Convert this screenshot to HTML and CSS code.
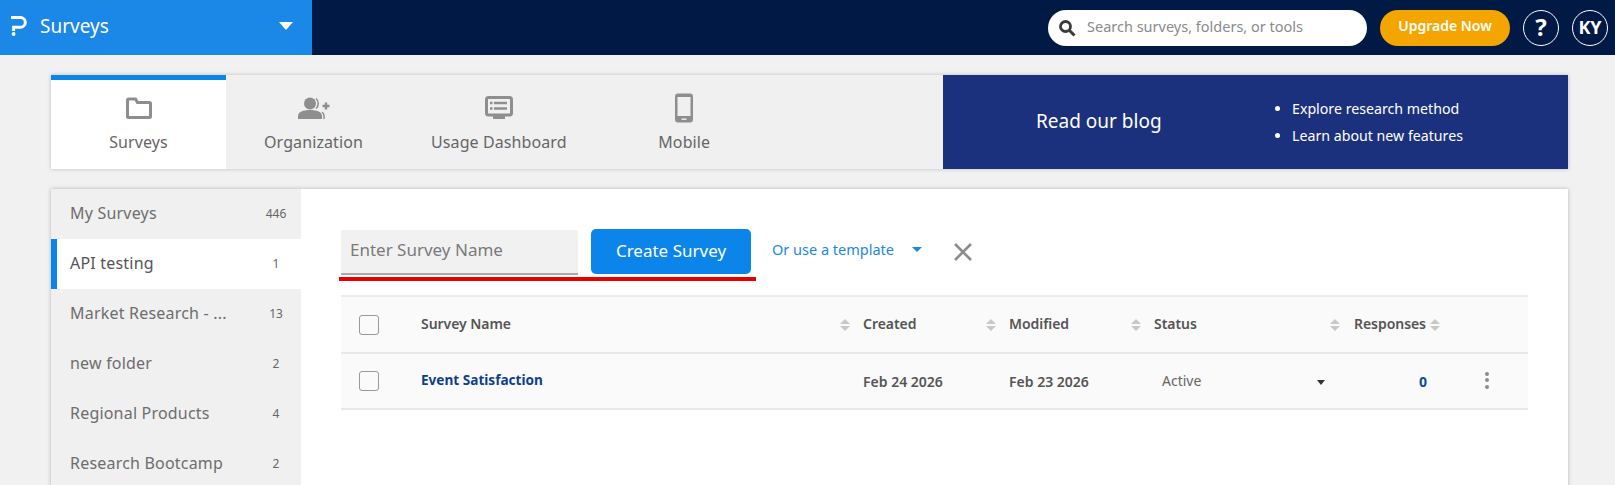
FILE: index.html
```html
<!DOCTYPE html>
<html lang="en">
<head>
<meta charset="utf-8">
<title>Surveys</title>
<link rel="stylesheet" href="styles.css">
</head>
<body>
<header class="topbar">
  <div class="brand">
    <svg class="logo" viewBox="0 0 16 20" width="16" height="20"><path d="M0 1.600h9.500a4.800 4.800 0 0 1 0 9.600H2.600V15" fill="none" stroke="#fff" stroke-width="3"/><circle cx="2.600" cy="18" r="1.900" fill="#fff"/></svg>
    <span class="brand-name">Surveys</span>
    <span class="brand-caret"></span>
  </div>
  <div class="top-actions">
    <div class="search">
      <svg viewBox="0 0 18 18" width="18" height="18"><circle cx="7.500" cy="7.500" r="5" fill="none" stroke="#3a3a3a" stroke-width="2.800"/><path d="M11.500 11.500l5 5" stroke="#3a3a3a" stroke-width="3"/></svg>
      <span class="search-text">Search surveys, folders, or tools</span>
    </div>
    <div class="upgrade">Upgrade Now</div>
    <div class="round help">?</div>
    <div class="round">KY</div>
  </div>
</header>

<main class="page">
  <section class="tabs-panel">
    <nav class="tabs">
      <div class="tab active">
        <svg viewBox="0 0 26 22" width="26" height="22"><path d="M1.500 4V19.500a1 1 0 0 0 1 1h21a1 1 0 0 0 1-1V6.500a1 1 0 0 0-1-1H11.500L9.500 2H2.500a1 1 0 0 0-1 1z" fill="none" stroke="#8e8e8e" stroke-width="3"/></svg>
        <span>Surveys</span>
      </div>
      <div class="tab">
        <svg viewBox="0 0 32 22" width="32" height="22"><circle cx="12" cy="6.500" r="6" fill="#8e8e8e"/><path d="M0 22v-3c0-4 5-6 12-6s12 2 12 6v3z" fill="#8e8e8e"/><path d="M18 1.500c3 2.500 3 7.500 0 10M24 15c1.500 1 2 2.500 2 4v3" fill="none" stroke="#8e8e8e" stroke-width="1.500"/><path d="M24.500 9h7M28 5.500v7" stroke="#8e8e8e" stroke-width="2.400"/></svg>
        <span>Organization</span>
      </div>
      <div class="tab">
        <svg viewBox="0 0 28 24" width="28" height="24"><rect x="1.500" y="1.500" width="25" height="17.500" rx="2" fill="none" stroke="#8e8e8e" stroke-width="3"/><path d="M9 7h13M9 12.500h13M5 7h2.500M5 12.500h2.500" stroke="#8e8e8e" stroke-width="2.400"/><path d="M8 20h12v3H8z" fill="#8e8e8e"/></svg>
        <span>Usage Dashboard</span>
      </div>
      <div class="tab">
        <svg viewBox="0 0 18 29" width="18" height="29"><rect x="0" y="0" width="18" height="29" rx="3" fill="#8e8e8e"/><rect x="2.500" y="3.500" width="13" height="19" fill="#f0f0f0"/><rect x="6.500" y="25" width="5" height="1.400" fill="#f0f0f0"/></svg>
        <span>Mobile</span>
      </div>
    </nav>
    <aside class="blog">
      <div class="blog-title">Read our blog</div>
      <ul class="blog-list">
        <li>Explore research method</li>
        <li>Learn about new features</li>
      </ul>
    </aside>
  </section>

  <section class="content-panel">
    <aside class="folders">
      <div class="folder"><span>My Surveys</span><em>446</em></div>
      <div class="folder current"><span>API testing</span><em>1</em></div>
      <div class="folder"><span>Market Research - ...</span><em>13</em></div>
      <div class="folder"><span>new folder</span><em>2</em></div>
      <div class="folder"><span>Regional Products</span><em>4</em></div>
      <div class="folder"><span>Research Bootcamp</span><em>2</em></div>
    </aside>
    <div class="work">
      <div class="create-row">
        <div class="name-input">Enter Survey Name</div>
        <button class="create-btn">Create Survey</button>
        <a class="template">Or use a template<i class="tpl-caret"></i></a>
        <svg class="close" viewBox="0 0 20 20" width="20" height="20"><path d="M2 2l16 16M18 2L2 18" stroke="#8c8c8c" stroke-width="2.600" fill="none"/></svg>
      </div>
      <div class="table">
        <div class="row head">
          <div class="cell"><span class="check"></span></div>
          <div class="cell c-name"><span class="label">Survey Name</span><i class="sort end"></i></div>
          <div class="cell c-created"><span class="label">Created</span><i class="sort end"></i></div>
          <div class="cell c-modified"><span class="label">Modified</span><i class="sort end"></i></div>
          <div class="cell c-status"><span class="label">Status</span><i class="sort end"></i></div>
          <div class="cell c-resp"><span class="label">Responses</span><i class="sort"></i></div>
        </div>
        <div class="row body">
          <div class="cell"><span class="check"></span></div>
          <div class="cell c-name link"><span class="label">Event Satisfaction</span></div>
          <div class="cell c-created">Feb 24 2026</div>
          <div class="cell c-modified">Feb 23 2026</div>
          <div class="cell c-status"><span class="active-label">Active</span><i class="status-caret"></i></div>
          <div class="cell c-resp"><span class="zero">0</span><span class="kebab"><b></b><b></b><b></b></span></div>
        </div>
      </div>
    </div>
  </section>
</main>
</body>
</html>
```
FILE: styles.css
```css
* { box-sizing: border-box; }
html, body { margin: 0; height: 485px; overflow: hidden; }
body { background: #f1f1f1; font-family: "Noto Sans", "Open Sans", sans-serif; color: #555; }

.topbar { height: 55px; background: #001a45; display: flex; justify-content: space-between; }
.brand { width: 312px; background: #1b87e6; display: flex; align-items: center; padding: 0 19px 4px 11px; color: #fff; }
.logo { flex: none; }
.brand-name { font-size: 19px; margin-left: 13px; flex: 1; }
.brand-caret { width: 0; height: 0; border: 7px solid transparent; border-top: 8px solid #fff; border-bottom: 0; }
.top-actions { display: flex; align-items: center; padding-right: 7px; }
.search { width: 319px; height: 36px; background: #fff; border-radius: 18px; display: flex; align-items: center; padding-left: 10px; color: #8a8a8a; font-size: 14.500px; gap: 11px; }
.search-text { padding-bottom: 3px; }
.upgrade { width: 130px; height: 36px; margin-left: 13px; background: #f5a500; border-radius: 18px; color: #fff; font-size: 14px; font-weight: 600; display: flex; align-items: center; justify-content: center; padding-bottom: 5px; }
.round { width: 36px; height: 36px; border: 1px solid #fff; border-radius: 50%; color: #fff; font-weight: 700; font-size: 18px; display: flex; align-items: center; justify-content: center; margin-left: 13px; padding-bottom: 2px; }
.help { font-size: 24px; }

.page { padding: 20px 47px 0 51px; }
.tabs-panel { height: 94px; display: flex; background: #f0f0f0; box-shadow: 0 0 4px rgba(0,0,0,.22); }
.tabs { display: flex; flex: 1; }
.tab { min-width: 175px; padding: 5px 30px 0; display: flex; flex-direction: column; align-items: center; color: #666; font-size: 16px; letter-spacing: .1px; }
.tab svg { height: 30px; margin-top: 13px; }
.tab span { margin-top: 8px; line-height: 22px; }
.tab.active { background: #fff; border-top: 5px solid #0b85ea; padding-top: 0; }
.blog { width: 625px; background: #1c317e; color: #fff; display: flex; align-items: center; padding-left: 93px; }
.blog-title { font-size: 19px; width: 146px; padding-bottom: 2px; flex: none; }
.blog-list { margin: 0; padding: 0 0 0 110px; font-size: 14.200px; line-height: 27px; white-space: nowrap; }

.content-panel { margin-top: 20px; height: 320px; display: flex; background: #fff; box-shadow: 0 0 4px rgba(0,0,0,.25); }
.folders { width: 250px; background: #f0f0f0; flex: none; }
.folder { height: 50px; display: flex; align-items: center; padding: 0 0 2px 19px; font-size: 16px; letter-spacing: .2px; color: #6d6d6d; }
.folder em { font-style: normal; font-size: 12px; letter-spacing: 0; width: 50px; text-align: center; margin-left: auto; color: #666; }
.folder.current { background: #fff; border-left: 6px solid #0b85ea; padding-left: 13px; color: #555; }
.work { flex: 1; padding: 40px 40px 0; }
.create-row { display: flex; align-items: flex-start; height: 66px; position: relative; }
.create-row::after { content: ""; position: absolute; left: -2px; width: 417px; top: 48px; height: 4px; background: #e60000; }
.name-input { width: 237px; height: 45px; margin-top: 1px; background: #f1f1f1; border-bottom: 2px solid #aaa; color: #7a7a7a; font-size: 17px; padding: 8px 9px; }
.create-btn { width: 160px; height: 45px; margin-left: 13px; padding-bottom: 3px; background: #0b85ea; border: 0; border-radius: 5px; color: #fff; font: inherit; font-size: 17px; }
.template { margin-left: 21px; margin-top: 10px; color: #1b87e6; font-size: 14.500px; display: flex; align-items: center; }
.tpl-caret { margin-left: 18px; border: 5px solid transparent; border-top: 5px solid #1b87e6; border-bottom: 0; }
.close { margin: 13px 0 0 31px; }

.table { border-top: 2px solid #ececec; }
.row { display: grid; grid-template-columns: 80px 442px 146px 145px 200px 174px; background: #fafafa; height: 56px; align-items: center; border-bottom: 2px solid #e8e8e8; font-size: 14px; }
.head { height: 57px; }
.cell { display: flex; align-items: center; height: 100%; }
.label { padding-bottom: 3px; }
.head .cell { font-weight: 600; color: #555; letter-spacing: -.05px; }
.body .cell { font-weight: 600; color: #555; }
.check { width: 20px; height: 20px; margin-left: 18px; border: 1px solid #999; border-radius: 3px; }
.body .link { color: #0d3f8c; font-weight: 700; font-size: 13.600px; }
.c-name, .c-created, .c-modified { padding-right: 13px; }
.c-status { padding-right: 14px; }
.sort { display: inline-block; position: relative; width: 10px; height: 12px; margin-left: 4px; flex: none; }
.sort.end { margin-left: auto; }
.sort::before, .sort::after { content: ""; position: absolute; left: 0; border: 5px solid transparent; }
.sort::before { top: 0; border-bottom-color: #c8c8c8; border-top: 0; }
.sort::after { bottom: 0; border-top-color: #c8c8c8; border-bottom: 0; }
.body .c-status { padding-left: 8px; }
.active-label { font-weight: 400; color: #666; padding-bottom: 2px; }
.status-caret { margin: 2px 15px 0 auto; border: 4.500px solid transparent; border-top: 5px solid #333; border-bottom: 0; }
.zero { color: #0d4aa0; font-weight: 700; margin-left: 65px; }
.kebab { margin-left: 58px; padding-bottom: 2px; display: flex; flex-direction: column; gap: 2.500px; }
.kebab b { width: 4px; height: 4px; border-radius: 50%; background: #8c8c8c; }
```
